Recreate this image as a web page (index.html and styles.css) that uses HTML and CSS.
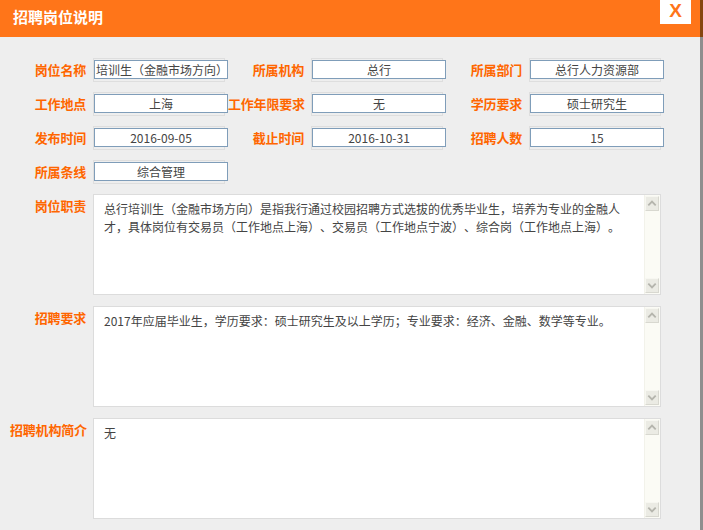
FILE: index.html
```html
<!DOCTYPE html>
<html lang="zh-CN">
<head>
<meta charset="utf-8">
<title>招聘岗位说明</title>
<link rel="stylesheet" href="styles.css">
</head>
<body>
<div class="window">
  <div class="dialog">
    <div class="header">
      <div class="title">招聘岗位说明</div>
      <div class="close">X</div>
    </div>
    <div class="form">
      <div class="label">岗位名称</div>
      <div class="field"><input class="inp" readonly value="培训生（金融市场方向）"></div>
      <div class="label">所属机构</div>
      <div class="field"><input class="inp" readonly value="总行"></div>
      <div class="label">所属部门</div>
      <div class="field"><input class="inp" readonly value="总行人力资源部"></div>

      <div class="label">工作地点</div>
      <div class="field"><input class="inp" readonly value="上海"></div>
      <div class="label">工作年限要求</div>
      <div class="field"><input class="inp" readonly value="无"></div>
      <div class="label">学历要求</div>
      <div class="field"><input class="inp" readonly value="硕士研究生"></div>

      <div class="label">发布时间</div>
      <div class="field"><input class="inp" readonly value="2016-09-05"></div>
      <div class="label">截止时间</div>
      <div class="field"><input class="inp" readonly value="2016-10-31"></div>
      <div class="label">招聘人数</div>
      <div class="field"><input class="inp" readonly value="15"></div>

      <div class="label">所属条线</div>
      <div class="field"><input class="inp" readonly value="综合管理"></div>
    </div>
    <div class="sections">
      <div class="section">
        <div class="slabel">岗位职责</div>
        <div class="box">
          <div class="box-text">总行培训生（金融市场方向）是指我行通过校园招聘方式选拔的优秀毕业生，培养为专业的金融人才，具体岗位有交易员（工作地点上海）、交易员（工作地点宁波）、综合岗（工作地点上海）。</div>
          <div class="sbar">
            <div class="sbtn"><svg width="13" height="13" viewBox="0 0 13 13"><polyline points="2.5,8.5 6.5,4.5 10.5,8.5" fill="none" stroke="#b5b5ad" stroke-width="2"/></svg></div>
            <div class="strack"></div>
            <div class="sbtn"><svg width="13" height="13" viewBox="0 0 13 13"><polyline points="2.5,4.5 6.5,8.5 10.5,4.5" fill="none" stroke="#b5b5ad" stroke-width="2"/></svg></div>
          </div>
        </div>
      </div>
      <div class="section">
        <div class="slabel">招聘要求</div>
        <div class="box">
          <div class="box-text">2017年应届毕业生，学历要求：硕士研究生及以上学历；专业要求：经济、金融、数学等专业。</div>
          <div class="sbar">
            <div class="sbtn"><svg width="13" height="13" viewBox="0 0 13 13"><polyline points="2.5,8.5 6.5,4.5 10.5,8.5" fill="none" stroke="#b5b5ad" stroke-width="2"/></svg></div>
            <div class="strack"></div>
            <div class="sbtn"><svg width="13" height="13" viewBox="0 0 13 13"><polyline points="2.5,4.5 6.5,8.5 10.5,4.5" fill="none" stroke="#b5b5ad" stroke-width="2"/></svg></div>
          </div>
        </div>
      </div>
      <div class="section">
        <div class="slabel">招聘机构简介</div>
        <div class="box">
          <div class="box-text">无</div>
          <div class="sbar">
            <div class="sbtn"><svg width="13" height="13" viewBox="0 0 13 13"><polyline points="2.5,8.5 6.5,4.5 10.5,8.5" fill="none" stroke="#b5b5ad" stroke-width="2"/></svg></div>
            <div class="strack"></div>
            <div class="sbtn"><svg width="13" height="13" viewBox="0 0 13 13"><polyline points="2.5,4.5 6.5,8.5 10.5,4.5" fill="none" stroke="#b5b5ad" stroke-width="2"/></svg></div>
          </div>
        </div>
      </div>
    </div>
  </div>
  <div class="edge"></div>
</div>
</body>
</html>
```

FILE: styles.css
```css
html, body {
  margin: 0;
  padding: 0;
}
body {
  background: #eeeeee;
  font-family: "Noto Sans CJK SC", "Liberation Sans", sans-serif;
  overflow: hidden;
  text-spacing-trim: space-all;
}
.window {
  display: flex;
  width: 703px;
  height: 530px;
}
.dialog {
  width: 700px;
  display: flex;
  flex-direction: column;
}
.edge {
  width: 3px;
  background: linear-gradient(#86460f 0, #86460f 37px, #8e8e8e 37px, #8e8e8e 100%);
}
.header {
  height: 37px;
  background: #ff7519;
  display: flex;
  justify-content: space-between;
  align-items: flex-start;
}
.title {
  color: #ffffff;
  font-weight: bold;
  font-size: 15px;
  line-height: 34px;
  padding-left: 13px;
}
.close {
  width: 31px;
  height: 24px;
  margin-right: 9px;
  background: #ffffff;
  color: #ff7519;
  font-family: "Liberation Sans", Arial, sans-serif;
  font-weight: bold;
  font-size: 19px;
  line-height: 21px;
  text-align: center;
}
.form {
  display: grid;
  grid-template-columns: 84px 134px 84px 134px 84px 134px;
  grid-auto-rows: 19px;
  row-gap: 15px;
  padding: 23px 0 0 10px;
}
.label {
  text-align: right;
  padding-right: 8px;
  color: #ff6600;
  font-weight: bold;
  font-size: 13px;
  line-height: 19px;
  white-space: nowrap;
  letter-spacing: -0.2px;
}
.field {
  position: relative;
  isolation: isolate;
}
.field::before {
  content: "";
  position: absolute;
  top: -2px;
  left: -1px;
  right: 3px;
  bottom: -3px;
  border: 1px solid #dedede;
  z-index: -1;
}
.inp {
  display: block;
  box-sizing: border-box;
  width: 134px;
  height: 19px;
  margin: 0;
  padding: 0 1px;
  border: 1px solid #7f9db9;
  background: #ffffff;
  color: #444444;
  font-family: "Noto Sans CJK SC", "Liberation Sans", sans-serif;
  font-size: 12px;
  text-align: center;
  outline: none;
  text-spacing-trim: space-all;
}
.sections {
  display: flex;
  flex-direction: column;
  gap: 11px;
  padding: 13px 0 0 10px;
}
.section {
  display: flex;
}
.slabel {
  width: 83px;
  box-sizing: border-box;
  padding-right: 7px;
  padding-top: 2px;
  text-align: right;
  color: #ff6600;
  font-weight: bold;
  font-size: 13px;
  line-height: 19px;
  white-space: nowrap;
  letter-spacing: -0.2px;
}
.box {
  width: 568px;
  height: 101px;
  box-sizing: border-box;
  border: 1px solid #dcdcdc;
  background: #ffffff;
  display: flex;
}
.box-text {
  flex: 1;
  padding: 5px 18px 0 10px;
  font-size: 12px;
  line-height: 18px;
  color: #444444;
}
.sbar {
  width: 16px;
  box-sizing: border-box;
  padding: 1px 1px 1px 0;
  background: #fbfbf5;
  border-left: 1px solid #f2f2ea;
  display: flex;
  flex-direction: column;
}
.sbtn {
  height: 15px;
  box-sizing: border-box;
  border: 1px solid #f7f7f1;
  border-right-color: #d8d8d0;
  border-bottom-color: #d8d8d0;
  background: #ebebe4;
  display: flex;
  align-items: center;
  justify-content: center;
}
.strack {
  flex: 1;
}
```
